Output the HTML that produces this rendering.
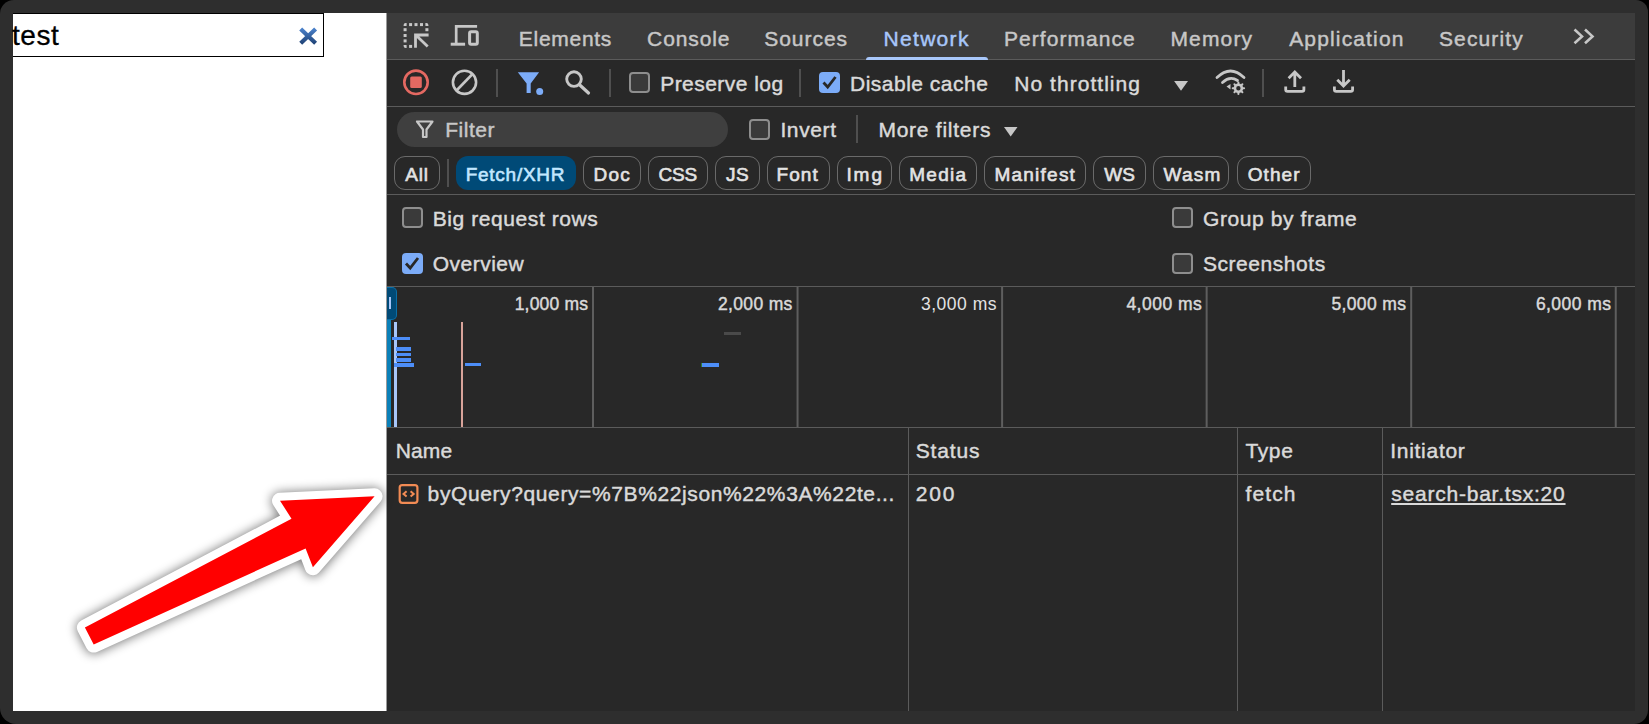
<!DOCTYPE html>
<html><head><meta charset="utf-8"><style>
html,body{margin:0;padding:0;width:1649px;height:724px;overflow:hidden;background:#000;}
body{position:relative;font-family:"Liberation Sans",sans-serif;}
.t{position:absolute;line-height:60px;white-space:nowrap;}
.abs{position:absolute;}
.frame{position:absolute;left:0;top:0;width:1648px;height:724px;background:#2e2e2e;border-radius:14px 12px 14px 16px;}
.hl{position:absolute;height:1px;background:#5b5b5b;}
.vl{position:absolute;width:1px;background:#5b5b5b;}
.sep{position:absolute;width:2px;background:#4f4f4f;}
.cb{position:absolute;width:17px;height:17px;border:2px solid #8e8e8e;border-radius:4px;background:#3a3a3a;}
.cbc{position:absolute;width:21px;height:21px;border-radius:4px;background:#7cacf8;}
.chip{position:absolute;top:156px;height:32px;border:1.3px solid #6e6e6e;border-radius:11px;box-sizing:content-box;}
svg{position:absolute;overflow:visible;}
</style></head><body>
<div class="frame"></div>
<!-- page -->
<div class="abs" style="left:13px;top:13px;width:373px;height:698px;background:#fff;overflow:hidden;">
  <div class="abs" style="left:-2px;top:0;width:311px;height:42px;border:1px solid #000;background:#fff;"></div>
</div>
<div class="t" style="left:12px;top:5.8px;font-size:28px;font-weight:400;letter-spacing:0.533px;color:#000;-webkit-text-stroke:0.3px #000;">test</div>
<svg style="left:0;top:0" width="1649" height="724">
<defs><linearGradient id="xg" x1="0" y1="0" x2="0" y2="1"><stop offset="0" stop-color="#4a80c9"/><stop offset="1" stop-color="#21457a"/></linearGradient></defs>
<path d="M300.7 28.9 L315.6 43.2 M315.6 28.9 L300.7 43.2" stroke="url(#xg)" stroke-width="4.2" stroke-linecap="butt"/>
</svg>
<div class="abs" style="left:386px;top:13px;width:1249px;height:698px;background:#282828;"></div>
<div class="abs" style="left:386px;top:13px;width:1px;height:698px;background:#9a9a9a;"></div>
<div class="abs" style="left:387px;top:13px;width:1248px;height:46px;background:#3c3c3c;"></div>
<div class="hl" style="left:387px;top:59px;width:1248px;"></div>
<div class="hl" style="left:387px;top:106px;width:1248px;"></div>
<div class="hl" style="left:387px;top:194px;width:1248px;"></div>
<div class="hl" style="left:387px;top:286px;width:1248px;"></div>
<div class="hl" style="left:387px;top:427px;width:1248px;"></div>
<div class="hl" style="left:387px;top:474px;width:1248px;"></div>
<div class="t" style="left:518.8px;top:9px;font-size:21px;font-weight:400;letter-spacing:0.714px;color:#c7c7c7;-webkit-text-stroke:0.45px #c7c7c7;">Elements</div>
<div class="t" style="left:647.1px;top:9px;font-size:21px;font-weight:400;letter-spacing:0.883px;color:#c7c7c7;-webkit-text-stroke:0.45px #c7c7c7;">Console</div>
<div class="t" style="left:764.2px;top:9px;font-size:21px;font-weight:400;letter-spacing:0.967px;color:#c7c7c7;-webkit-text-stroke:0.45px #c7c7c7;">Sources</div>
<div class="t" style="left:1004px;top:9px;font-size:21px;font-weight:400;letter-spacing:1.04px;color:#c7c7c7;-webkit-text-stroke:0.45px #c7c7c7;">Performance</div>
<div class="t" style="left:1170.4px;top:9px;font-size:21px;font-weight:400;letter-spacing:1.16px;color:#c7c7c7;-webkit-text-stroke:0.45px #c7c7c7;">Memory</div>
<div class="t" style="left:1289.2px;top:9px;font-size:21px;font-weight:400;letter-spacing:1.15px;color:#c7c7c7;-webkit-text-stroke:0.45px #c7c7c7;">Application</div>
<div class="t" style="left:1439px;top:9px;font-size:21px;font-weight:400;letter-spacing:1.114px;color:#c7c7c7;-webkit-text-stroke:0.45px #c7c7c7;">Security</div>
<div class="t" style="left:883.5px;top:9px;font-size:21px;font-weight:400;letter-spacing:1.317px;color:#a8c7fa;-webkit-text-stroke:0.45px #a8c7fa;">Network</div>
<div class="abs" style="left:866px;top:57px;width:122px;height:3px;background:#a8c7fa;border-radius:3px 3px 0 0;"></div>
<svg style="left:0;top:0" width="1649" height="724" fill="none" stroke="#c7c7c7">
<g fill="#c7c7c7" stroke="none">
<path d="M403.6 26.1 V25.1 Q403.6 23.1 405.6 23.1 H406.6 V26.1 Z"/><rect x="409.1" y="23.1" width="3" height="3"/><rect x="414.5" y="23.1" width="3" height="3"/><rect x="420" y="23.1" width="3" height="3"/><path d="M425.4 23.1 H426.4 Q428.4 23.1 428.4 25.1 V26.1 H425.4 Z"/>
<rect x="403.6" y="28.2" width="3" height="3"/><rect x="403.6" y="34" width="3" height="3"/><rect x="403.6" y="39.4" width="3" height="3"/><path d="M403.6 44.9 H406.6 V47.9 H405.6 Q403.6 47.9 403.6 45.9 Z"/>
<rect x="425.4" y="28.2" width="3" height="3"/><rect x="409.1" y="44.9" width="3" height="3"/>
</g>
<path d="M415.5 47.7 V35 H428.6 M416 35.3 L427.7 46.4" stroke-width="2.8"/>
<path d="M456.2 45 V26.4 H477.1" stroke-width="2.7"/>
<path d="M450.7 44.2 H465.1" stroke-width="3"/>
<rect x="469.6" y="31.8" width="7.7" height="12.5" rx="1.5" stroke-width="3"/>
<path d="M1574.5 29.5 L1582 36.4 L1574.5 43.3 M1585 29.5 L1592.5 36.4 L1585 43.3" stroke-width="2.6"/>
</svg>
<svg style="left:0;top:0" width="1649" height="724" fill="none" stroke="#c7c7c7">
<circle cx="416" cy="82.3" r="11.7" stroke="#e46962" stroke-width="2.6"/>
<rect x="410.2" y="76.5" width="11.6" height="11.6" rx="1.5" fill="#e46962" stroke="none"/>
<circle cx="464.5" cy="82.3" r="11.6" stroke-width="2.6"/>
<path d="M456.5 90.5 L472.5 74" stroke-width="2.6"/>
<path d="M517.8 72.2 H539.1 L530.7 83.5 V93 H526.6 V83.5 Z" fill="#7cacf8" stroke="none"/>
<circle cx="539.7" cy="91.4" r="3.5" fill="#7cacf8" stroke="none"/>
<circle cx="574" cy="79.1" r="7.3" stroke-width="2.9"/>
<path d="M579.5 84.8 L588.5 93" stroke-width="3.2" stroke-linecap="round"/>
<path d="M1174.1 81 H1188 L1181 90.7 Z" fill="#c7c7c7" stroke="none"/>
<path d="M1217 77.5 Q1230.5 64.5 1244 77.5" stroke-width="2.8" stroke-linecap="round"/>
<path d="M1222.5 82.5 Q1230 75.5 1237.5 80.5" stroke-width="2.8" stroke-linecap="round"/>
<path d="M1226.5 86.6 L1230.5 84 L1230.5 89.5 Z" fill="#c7c7c7" stroke="none"/>
<circle cx="1238.4" cy="88.3" r="3.5" stroke-width="2.6"/>
<g stroke-width="2" stroke-linecap="round"><path d="M1238.4 82.6 V84 M1238.4 92.6 V94 M1232.7 88.3 H1234.1 M1242.7 88.3 H1244.1 M1234.4 84.3 L1235.3 85.2 M1241.5 91.4 L1242.4 92.3 M1234.4 92.3 L1235.3 91.4 M1241.5 85.2 L1242.4 84.3"/></g>
<path d="M1294.8 87 V71.5 M1288.6 78.2 L1294.8 72 L1301 78.2" stroke-width="2.8"/>
<path d="M1285.7 86.5 V89.5 Q1285.7 91.3 1287.5 91.3 H1302.1 Q1303.9 91.3 1303.9 89.5 V86.5" stroke-width="2.8"/>
<path d="M1343.5 70 V86.5 M1337.3 79.8 L1343.5 86 L1349.7 79.8" stroke-width="2.8"/>
<path d="M1334.4 86.5 V89.5 Q1334.4 91.3 1336.2 91.3 H1350.8 Q1352.6 91.3 1352.6 89.5 V86.5" stroke-width="2.8"/>
<path d="M1569 81 l0 0" />
</svg>
<div class="sep" style="left:496px;top:69px;height:28px;"></div>
<div class="sep" style="left:609px;top:69px;height:28px;"></div>
<div class="sep" style="left:799px;top:69px;height:28px;"></div>
<div class="sep" style="left:1261.5px;top:69px;height:28px;"></div>
<div class="cb" style="left:629px;top:72px;"></div>
<div class="cbc" style="left:819px;top:72px;"></div>
<svg style="left:0;top:0" width="1649" height="724"><path d="M823.5 82.5 L827.7 87 L835.5 77" stroke="#282828" stroke-width="2.8" fill="none"/></svg>
<div class="t" style="left:660.2px;top:54px;font-size:21px;font-weight:400;letter-spacing:0.464px;color:#dadada;-webkit-text-stroke:0.45px #dadada;">Preserve log</div>
<div class="t" style="left:850px;top:54px;font-size:21px;font-weight:400;letter-spacing:0.5px;color:#dadada;-webkit-text-stroke:0.45px #dadada;">Disable cache</div>
<div class="t" style="left:1014.3px;top:54px;font-size:21px;font-weight:400;letter-spacing:1.033px;color:#dadada;-webkit-text-stroke:0.45px #dadada;">No throttling</div>
<div class="abs" style="left:397px;top:112px;width:331px;height:35px;border-radius:18px;background:#3f3f3f;"></div>
<svg style="left:0;top:0" width="1649" height="724"><path d="M417 121.5 H432.5 L426.5 129.5 V137 H423 V129.5 Z" fill="none" stroke="#c7c7c7" stroke-width="2.2" stroke-linejoin="round"/></svg>
<div class="cb" style="left:749px;top:119px;"></div>
<div class="sep" style="left:856px;top:115px;height:28px;"></div>
<svg style="left:0;top:0" width="1649" height="724"><path d="M1004 127 H1017.5 L1010.7 136.5 Z" fill="#c7c7c7"/></svg>
<div class="t" style="left:445.2px;top:100px;font-size:21px;font-weight:400;letter-spacing:0.54px;color:#c7c7c7;-webkit-text-stroke:0.45px #c7c7c7;">Filter</div>
<div class="t" style="left:780.4px;top:100px;font-size:21px;font-weight:400;letter-spacing:0.62px;color:#dadada;-webkit-text-stroke:0.45px #dadada;">Invert</div>
<div class="t" style="left:878.4px;top:100px;font-size:21px;font-weight:400;letter-spacing:0.755px;color:#dadada;-webkit-text-stroke:0.45px #dadada;">More filters</div>
<div class="abs" style="left:394.2px;top:156px;width:44.1px;height:32.4px;border:1.3px solid #6a6a6a;border-radius:11px;"></div>
<div class="abs" style="left:455.5px;top:156px;width:120.5px;height:34px;border-radius:12px;background:#004a77;"></div>
<div class="abs" style="left:582.8px;top:156px;width:56.7px;height:32.4px;border:1.3px solid #6a6a6a;border-radius:11px;"></div>
<div class="abs" style="left:648px;top:156px;width:58.1px;height:32.4px;border:1.3px solid #6a6a6a;border-radius:11px;"></div>
<div class="abs" style="left:715px;top:156px;width:43.1px;height:32.4px;border:1.3px solid #6a6a6a;border-radius:11px;"></div>
<div class="abs" style="left:766.9px;top:156px;width:61.3px;height:32.4px;border:1.3px solid #6a6a6a;border-radius:11px;"></div>
<div class="abs" style="left:837px;top:156px;width:53.0px;height:32.4px;border:1.3px solid #6a6a6a;border-radius:11px;"></div>
<div class="abs" style="left:899.1px;top:156px;width:75.9px;height:32.4px;border:1.3px solid #6a6a6a;border-radius:11px;"></div>
<div class="abs" style="left:984.4px;top:156px;width:99.6px;height:32.4px;border:1.3px solid #6a6a6a;border-radius:11px;"></div>
<div class="abs" style="left:1093.4px;top:156px;width:50.5px;height:32.4px;border:1.3px solid #6a6a6a;border-radius:11px;"></div>
<div class="abs" style="left:1153.4px;top:156px;width:74.0px;height:32.4px;border:1.3px solid #6a6a6a;border-radius:11px;"></div>
<div class="abs" style="left:1236.8px;top:156px;width:72.7px;height:32.4px;border:1.3px solid #6a6a6a;border-radius:11px;"></div>
<div class="sep" style="left:447px;top:159px;height:28px;width:1.5px"></div>
<div class="t" style="left:405.2px;top:145px;font-size:19px;font-weight:400;letter-spacing:0.85px;color:#e3e3e3;-webkit-text-stroke:0.6px #e3e3e3;">All</div>
<div class="t" style="left:465.7px;top:145px;font-size:19px;font-weight:400;letter-spacing:0.738px;color:#c2e7ff;-webkit-text-stroke:0.6px #c2e7ff;">Fetch/XHR</div>
<div class="t" style="left:593.5px;top:145px;font-size:19px;font-weight:400;letter-spacing:1.2px;color:#e3e3e3;-webkit-text-stroke:0.6px #e3e3e3;">Doc</div>
<div class="t" style="left:658.6px;top:145px;font-size:19px;font-weight:400;letter-spacing:-0.25px;color:#e3e3e3;-webkit-text-stroke:0.6px #e3e3e3;">CSS</div>
<div class="t" style="left:726px;top:145px;font-size:19px;font-weight:400;letter-spacing:0.5px;color:#e3e3e3;-webkit-text-stroke:0.6px #e3e3e3;">JS</div>
<div class="t" style="left:776.5px;top:145px;font-size:19px;font-weight:400;letter-spacing:1.067px;color:#e3e3e3;-webkit-text-stroke:0.6px #e3e3e3;">Font</div>
<div class="t" style="left:846.4px;top:145px;font-size:19px;font-weight:400;letter-spacing:1.95px;color:#e3e3e3;-webkit-text-stroke:0.6px #e3e3e3;">Img</div>
<div class="t" style="left:909.3px;top:145px;font-size:19px;font-weight:400;letter-spacing:1.225px;color:#e3e3e3;-webkit-text-stroke:0.6px #e3e3e3;">Media</div>
<div class="t" style="left:994.4px;top:145px;font-size:19px;font-weight:400;letter-spacing:1.243px;color:#e3e3e3;-webkit-text-stroke:0.6px #e3e3e3;">Manifest</div>
<div class="t" style="left:1104.3px;top:145px;font-size:19px;font-weight:400;letter-spacing:-0.1px;color:#e3e3e3;-webkit-text-stroke:0.6px #e3e3e3;">WS</div>
<div class="t" style="left:1163.6px;top:145px;font-size:19px;font-weight:400;letter-spacing:1.233px;color:#e3e3e3;-webkit-text-stroke:0.6px #e3e3e3;">Wasm</div>
<div class="t" style="left:1247.7px;top:145px;font-size:19px;font-weight:400;letter-spacing:1.1px;color:#e3e3e3;-webkit-text-stroke:0.6px #e3e3e3;">Other</div>
<div class="cb" style="left:401.5px;top:207px;"></div>
<div class="cbc" style="left:401.5px;top:253px;"></div>
<svg style="left:0;top:0" width="1649" height="724"><path d="M406 263.5 L410.2 268 L418 258" stroke="#282828" stroke-width="2.8" fill="none"/></svg>
<div class="cb" style="left:1172px;top:207px;"></div>
<div class="cb" style="left:1172px;top:253px;"></div>
<div class="t" style="left:432.7px;top:189px;font-size:21px;font-weight:400;letter-spacing:0.58px;color:#dadada;-webkit-text-stroke:0.45px #dadada;">Big request rows</div>
<div class="t" style="left:432.7px;top:234px;font-size:21px;font-weight:400;letter-spacing:0.5px;color:#dadada;-webkit-text-stroke:0.45px #dadada;">Overview</div>
<div class="t" style="left:1203px;top:189px;font-size:21px;font-weight:400;letter-spacing:0.6px;color:#dadada;-webkit-text-stroke:0.45px #dadada;">Group by frame</div>
<div class="t" style="left:1203px;top:234px;font-size:21px;font-weight:400;letter-spacing:0.54px;color:#dadada;-webkit-text-stroke:0.45px #dadada;">Screenshots</div>
<svg style="left:0;top:0" width="1649" height="724"><line x1="593.00" y1="287" x2="593.00" y2="427" stroke="#5e5e5e" stroke-width="2"/><line x1="797.55" y1="287" x2="797.55" y2="427" stroke="#5e5e5e" stroke-width="2"/><line x1="1002.10" y1="287" x2="1002.10" y2="427" stroke="#5e5e5e" stroke-width="2"/><line x1="1206.65" y1="287" x2="1206.65" y2="427" stroke="#5e5e5e" stroke-width="2"/><line x1="1411.20" y1="287" x2="1411.20" y2="427" stroke="#5e5e5e" stroke-width="2"/><line x1="1615.75" y1="287" x2="1615.75" y2="427" stroke="#5e5e5e" stroke-width="2"/></svg>
<div class="t" style="left:514.7px;top:274px;font-size:17.5px;font-weight:400;letter-spacing:0.186px;color:#dadada;-webkit-text-stroke:0.45px #dadada;">1,000 ms</div>
<div class="t" style="left:717.9px;top:274px;font-size:17.5px;font-weight:400;letter-spacing:0.357px;color:#dadada;-webkit-text-stroke:0.45px #dadada;">2,000 ms</div>
<div class="t" style="left:1126.4px;top:274px;font-size:17.5px;font-weight:400;letter-spacing:0.486px;color:#dadada;-webkit-text-stroke:0.45px #dadada;">4,000 ms</div>
<div class="t" style="left:1331.4px;top:274px;font-size:17.5px;font-weight:400;letter-spacing:0.371px;color:#dadada;-webkit-text-stroke:0.45px #dadada;">5,000 ms</div>
<div class="t" style="left:1535.9px;top:274px;font-size:17.5px;font-weight:400;letter-spacing:0.443px;color:#dadada;-webkit-text-stroke:0.45px #dadada;">6,000 ms</div>
<div class="t" style="left:921px;top:274px;font-size:17.5px;letter-spacing:0.5px;color:#e3e3e3;">3,000 ms</div>
<div class="abs" style="left:387px;top:287px;width:9.5px;height:33px;background:#004a77;border:1px solid #0a6fa8;border-left:none;border-radius:0 5px 5px 0;box-sizing:border-box;"></div>
<div class="abs" style="left:388.5px;top:297px;width:2.4px;height:12px;background:#a8c7fa;"></div>
<div class="abs" style="left:387px;top:320px;width:3.6px;height:107px;background:#0b80b8;"></div>
<div class="abs" style="left:394.4px;top:322px;width:2.4px;height:105px;background:#a8c7fa;"></div>
<div class="abs" style="left:460.7px;top:322px;width:2px;height:105px;background:#d8a39a;"></div>
<div class="abs" style="left:391.5px;top:337px;width:18.6px;height:3.4px;background:#4d8ef8;"></div>
<div class="abs" style="left:395.6px;top:347.4px;width:15px;height:3.4px;background:#4d8ef8;"></div>
<div class="abs" style="left:395.6px;top:353px;width:15px;height:3.4px;background:#4d8ef8;"></div>
<div class="abs" style="left:395.6px;top:358.2px;width:15px;height:3.4px;background:#4d8ef8;"></div>
<div class="abs" style="left:393.5px;top:363.2px;width:20.2px;height:3.4px;background:#4d8ef8;"></div>
<div class="abs" style="left:464.9px;top:362.8px;width:16.5px;height:3.4px;background:#4d8ef8;"></div>
<div class="abs" style="left:701.8px;top:363.2px;width:17.5px;height:3.4px;background:#4d8ef8;"></div>
<div class="abs" style="left:700.5px;top:363.2px;width:1.3px;height:3.4px;background:#2e7d32;"></div>
<div class="abs" style="left:724px;top:331.5px;width:16.7px;height:3.4px;background:#4a4a4a;"></div>
<div class="vl" style="left:908px;top:428px;height:283px;"></div>
<div class="vl" style="left:1237px;top:428px;height:283px;"></div>
<div class="vl" style="left:1382px;top:428px;height:283px;"></div>
<div class="t" style="left:395.7px;top:421px;font-size:21px;font-weight:400;letter-spacing:0.167px;color:#dadada;-webkit-text-stroke:0.45px #dadada;">Name</div>
<div class="t" style="left:915.7px;top:421px;font-size:21px;font-weight:400;letter-spacing:0.86px;color:#dadada;-webkit-text-stroke:0.45px #dadada;">Status</div>
<div class="t" style="left:1245.5px;top:421px;font-size:21px;font-weight:400;letter-spacing:0.6px;color:#dadada;-webkit-text-stroke:0.45px #dadada;">Type</div>
<div class="t" style="left:1390.2px;top:421px;font-size:21px;font-weight:400;letter-spacing:0.725px;color:#dadada;-webkit-text-stroke:0.45px #dadada;">Initiator</div>
<div class="t" style="left:427.6px;top:464px;font-size:21px;font-weight:400;letter-spacing:0.611px;color:#dadada;-webkit-text-stroke:0.45px #dadada;">byQuery?query=%7B%22json%22%3A%22te...</div>
<div class="t" style="left:915.7px;top:464px;font-size:21px;font-weight:400;letter-spacing:1.85px;color:#dadada;-webkit-text-stroke:0.45px #dadada;">200</div>
<div class="t" style="left:1245.5px;top:464px;font-size:21px;font-weight:400;letter-spacing:1.1px;color:#dadada;-webkit-text-stroke:0.45px #dadada;">fetch</div>
<div class="t" style="left:1391.2px;top:464px;font-size:21px;font-weight:400;letter-spacing:0.781px;color:#dadada;-webkit-text-stroke:0.45px #dadada;text-decoration:underline;text-underline-offset:2px;text-decoration-thickness:2px;">search-bar.tsx:20</div>
<svg style="left:0;top:0" width="1649" height="724" fill="none" stroke="#f28b54">
<rect x="399.7" y="485.1" width="17.7" height="17.7" rx="2.5" stroke-width="2.2"/>
<path d="M406.6 491.2 L403.5 493.9 L406.6 496.6 M410.6 491.2 L413.7 493.9 L410.6 496.6" stroke-width="2"/>
</svg>
<svg style="left:0;top:0" width="1649" height="724">
<defs><filter id="sh" x="-30%" y="-50%" width="160%" height="200%"><feGaussianBlur stdDeviation="5.5"/></filter></defs>
<polygon points="374.6,496.3 312.9,567.3 305.6,548.4 93.7,644.6 84.9,627.5 291.5,518.7 280,500.7" fill="#000" opacity="0.55" stroke="#000" stroke-width="17" stroke-linejoin="round" filter="url(#sh)" transform="translate(0,0.5)"/>
<polygon points="374.6,496.3 312.9,567.3 305.6,548.4 93.7,644.6 84.9,627.5 291.5,518.7 280,500.7" fill="#fff" stroke="#fff" stroke-width="16" stroke-linejoin="round"/>
<polygon points="374.6,496.3 312.9,567.3 305.6,548.4 93.7,644.6 84.9,627.5 291.5,518.7 280,500.7" fill="#ff0000"/>
</svg>
</body></html>
